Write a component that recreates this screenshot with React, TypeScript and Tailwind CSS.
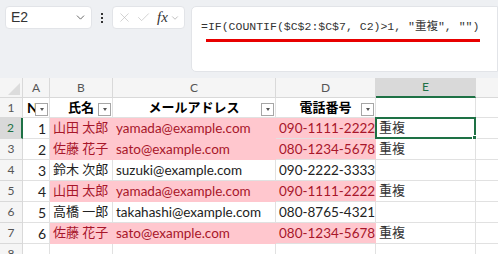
import { Check, ChevronDown, X } from "lucide-react";

const font = "font-['Lato','Noto_Sans_CJK_JP',sans-serif]";

type Row = { no: number; name: string; mail: string; tel: string; dup: boolean };

const rows: Row[] = [
  { no: 1, name: "山田 太郎", mail: "yamada@example.com", tel: "090-1111-2222", dup: true },
  { no: 2, name: "佐藤 花子", mail: "sato@example.com", tel: "080-1234-5678", dup: true },
  { no: 3, name: "鈴木 次郎", mail: "suzuki@example.com", tel: "090-2222-3333", dup: false },
  { no: 4, name: "山田 太郎", mail: "yamada@example.com", tel: "090-1111-2222", dup: true },
  { no: 5, name: "高橋 一郎", mail: "takahashi@example.com", tel: "080-8765-4321", dup: false },
  { no: 6, name: "佐藤 花子", mail: "sato@example.com", tel: "080-1234-5678", dup: true },
];

const FilterBtn = () => (
  <div className="absolute right-[1px] top-[5px] w-[13px] h-[13px] border border-[#a6a6a6] bg-white flex items-center justify-center">
    <div className="w-0 h-0 border-l-[2.5px] border-r-[2.5px] border-t-[3px] border-l-transparent border-r-transparent border-t-[#555]" />
  </div>
);

const ColHead = ({ label, w, active }: { label: string; w: string; active?: boolean }) => (
  <div
    className={`${w} shrink-0 h-full flex items-center justify-center border-r border-[#d9d9d9] text-[12px] ${
      active ? "bg-[#d9d9d9] text-[#1e7145] border-b-2 border-b-[#1e7145]" : "text-[#555] border-b border-b-[#d9d9d9]"
    }`}
  >
    {label}
  </div>
);

export default function App() {
  return (
    <div className={`w-[498px] h-[254px] overflow-hidden bg-white ${font}`}>
      {/* formula bar */}
      <div className="h-[78px] bg-[#eef0f3] flex items-start pt-[6px] pl-[5px] gap-[6px]">
        <div className="w-[87px] h-[23px] bg-white rounded-[4px] border border-[#e2e4e8] flex items-center justify-between pl-[5px] pr-[4px]">
          <span className="font-['Liberation_Sans',sans-serif] text-[14px] text-[#333]">E2</span>
          <ChevronDown size={13} strokeWidth={1.6} className="text-[#555]" />
        </div>
        <div className="w-[8px] h-[23px] flex flex-col items-center justify-center gap-[2px]">
          <div className="w-[2px] h-[2px] bg-[#333]" />
          <div className="w-[2px] h-[2px] bg-[#333]" />
          <div className="w-[2px] h-[2px] bg-[#333]" />
        </div>
        <div className="w-[73px] h-[23px] bg-white rounded-[4px] border border-[#e2e4e8] flex items-center pl-[4px] gap-[4px]">
          <X size={15} strokeWidth={1} className="text-[#b8b8b8]" />
          <Check size={15} strokeWidth={1} className="text-[#b8b8b8]" />
          <span className="font-['Liberation_Serif',serif] italic text-[15px] text-[#333] ml-[2px]">fx</span>
          <ChevronDown size={10} strokeWidth={1.5} className="text-[#999] -ml-[2px]" />
        </div>
        <div className="flex-1 h-[66px] bg-white rounded-l-[5px] border border-[#e2e4e8] pl-[9px] pt-[5px]">
          <div className="inline-flex flex-col">
            <span className="font-['Liberation_Mono','Noto_Sans_CJK_JP',monospace] text-[11.5px] text-[#333] whitespace-pre leading-[16px]">
              =IF(COUNTIF($C$2:$C$7, C2)&gt;1, "重複", "")
            </span>
            <div className="h-[3px] bg-[#e80000] mt-[4px] ml-[5px] w-[274px]" />
          </div>
        </div>
      </div>

      {/* column headers */}
      <div className="h-[20px] flex bg-[#f5f5f5]">
        <div className="w-[23px] shrink-0 h-full border-r border-b border-[#d9d9d9] relative">
          <div className="absolute right-[2px] bottom-[2px] w-0 h-0 border-b-[12px] border-l-[12px] border-l-transparent border-b-[#dcdcdc]" />
        </div>
        <ColHead label="A" w="w-[27px]" />
        <ColHead label="B" w="w-[63px]" />
        <ColHead label="C" w="w-[163px]" />
        <ColHead label="D" w="w-[100px]" />
        <ColHead label="E" w="w-[100px]" active />
        <div className="flex-1 h-full border-b border-[#d9d9d9]" />
      </div>

      {/* row 1: table header */}
      <div className="h-[20px] flex text-[13px] font-bold text-black">
        <div className="w-[23px] shrink-0 h-full bg-[#f5f5f5] border-r border-b border-[#d9d9d9] flex items-center justify-center text-[12px] font-normal text-[#555]">
          1
        </div>
        <div className="w-[27px] shrink-0 h-full border-r border-b border-[#e1e1e1] relative flex items-center pl-[4px] overflow-hidden text-[14px]">
          No
          <FilterBtn />
        </div>
        <div className="w-[63px] shrink-0 h-full border-r border-b border-[#e1e1e1] relative flex items-center justify-center">
          氏名
          <FilterBtn />
        </div>
        <div className="w-[163px] shrink-0 h-full border-r border-b border-[#e1e1e1] relative flex items-center justify-center">
          メールアドレス
          <FilterBtn />
        </div>
        <div className="w-[100px] shrink-0 h-full border-r border-b border-[#e1e1e1] relative flex items-center justify-center">
          電話番号
          <FilterBtn />
        </div>
        <div className="w-[100px] shrink-0 h-full border-r border-b border-[#e1e1e1]" />
        <div className="flex-1 h-full border-b border-[#e1e1e1]" />
      </div>

      {/* data rows */}
      {rows.map((r, i) => {
        const sel = i === 0;
        const fill = r.dup ? "bg-[#ffc7ce] text-[#a8162a] border-[#ffc7ce]" : "text-[#222] border-[#e1e1e1]";
        return (
          <div key={r.no} className="h-[21px] flex text-[13.5px]">
            <div
              className={`w-[23px] shrink-0 h-full border-b border-[#d9d9d9] flex items-center justify-center text-[12px] ${
                sel ? "bg-[#d9d9d9] text-[#1e7145] border-r-2 border-r-[#1e7145]" : "bg-[#f5f5f5] text-[#555] border-r border-r-[#d9d9d9]"
              }`}
            >
              {i + 2}
            </div>
            <div className="w-[27px] shrink-0 h-full border-r border-b border-[#e1e1e1] flex items-center justify-end pr-[3px] text-[#222] text-[14px]">
              {r.no}
            </div>
            <div className={`w-[63px] shrink-0 h-full border-r border-b flex items-center pl-[3px] whitespace-nowrap text-[13px] ${fill}`}>
              {r.name}
            </div>
            <div className={`w-[163px] shrink-0 h-full border-r border-b flex items-center pl-[3px] whitespace-nowrap overflow-hidden ${fill}`}>
              {r.mail}
            </div>
            <div
              className={`w-[100px] shrink-0 h-full border-b flex items-center pl-[3px] whitespace-nowrap ${
                r.dup ? "bg-[#ffc7ce] text-[#a8162a] border-[#e1e1e1] border-r border-r-[#ffc7ce]" : "text-[#222] border-r border-[#e1e1e1]"
              }`}
            >
              {r.tel}
            </div>
            <div className="w-[100px] shrink-0 h-full border-r border-b border-[#e1e1e1] flex items-center pl-[3px] text-[13px] text-[#333] relative">
              {r.dup ? "重複" : ""}
              {sel && (
                <div className="absolute -left-[1px] -top-[1px] w-[101px] h-[22px] border-2 border-[#1e7145]">
                  <div className="absolute -right-[3px] -bottom-[3px] w-[5px] h-[5px] bg-[#1e7145] border border-white" />
                </div>
              )}
            </div>
            <div className="flex-1 h-full border-b border-[#e1e1e1]" />
          </div>
        );
      })}

      {/* row 8 */}
      <div className="h-[21px] flex">
        <div className="w-[23px] shrink-0 h-full bg-[#f5f5f5] border-r border-b border-[#d9d9d9] flex items-center justify-center text-[12px] text-[#555]">
          8
        </div>
        <div className="w-[27px] shrink-0 h-full border-r border-[#e1e1e1]" />
        <div className="w-[63px] shrink-0 h-full border-r border-[#e1e1e1]" />
        <div className="w-[163px] shrink-0 h-full border-r border-[#e1e1e1]" />
        <div className="w-[100px] shrink-0 h-full border-r border-[#e1e1e1]" />
        <div className="w-[100px] shrink-0 h-full border-r border-[#e1e1e1]" />
      </div>
    </div>
  );
}
